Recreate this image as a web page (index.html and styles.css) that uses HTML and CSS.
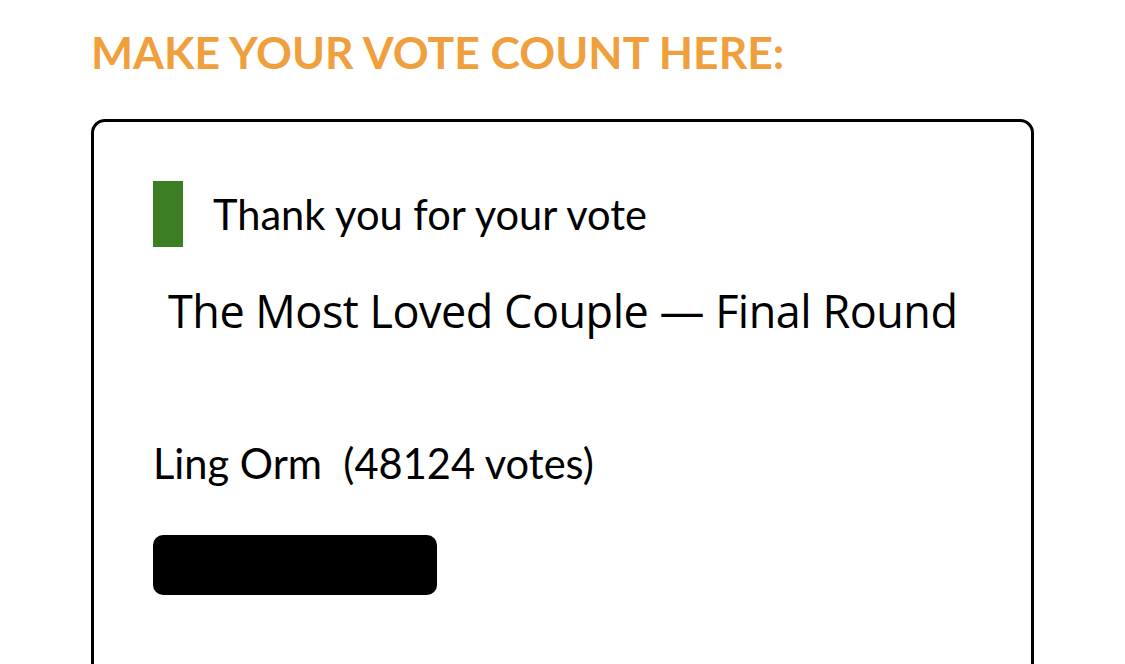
FILE: index.html
```html
<!DOCTYPE html>
<html lang="en">
  <head>
    <meta charset="UTF-8" />
    <meta name="viewport" content="width=device-width, initial-scale=1.0" />
    <title>Vote</title>
    <link rel="stylesheet" href="styles.css">
  </head>
  <body>
    <main class="page">
      <h2 class="heading">MAKE YOUR VOTE COUNT HERE:</h2>
      <section class="card">
        <div class="notice">
          <span class="notice-mark"></span>
          <span class="notice-text">Thank you for your vote</span>
        </div>
        <h3 class="poll-title">The Most Loved Couple — Final Round</h3>
        <div class="result">
          <p class="result-label">Ling Orm&nbsp; (48124 votes)</p>
          <div class="result-bar"></div>
        </div>
      </section>
    </main>
  </body>
</html>
```

FILE: styles.css
```css
* {
  margin: 0;
  padding: 0;
  box-sizing: border-box;
}
body {
  background: #fff;
  font-family: Lato, "Liberation Sans", sans-serif;
  color: #000;
}
.page {
  padding: 24px 91px 0;
}
.heading {
  font-family: Lato, sans-serif;
  font-weight: 700;
  font-size: 44.5px;
  line-height: 56px;
  color: #efa03c;
  margin-bottom: 39px;
}
.card {
  border: 3px solid #000;
  border-radius: 14px;
  padding: 59px 59px 0;
  height: 560px;
}
.notice {
  display: flex;
  align-items: center;
  gap: 30px;
}
.notice-mark {
  width: 30px;
  height: 66px;
  background: #3a7d23;
}
.notice-text {
  font-size: 41.6px;
}
.poll-title {
  font-family: "Open Sans", sans-serif;
  font-weight: 400;
  font-size: 45px;
  letter-spacing: -0.5px;
  white-space: nowrap;
  line-height: 56px;
  padding-left: 15px;
  margin-top: 36px;
}
.result {
  margin-top: 99px;
}
.result-label {
  font-size: 41.6px;
  line-height: 50px;
}
.result-bar {
  margin-top: 47px;
  width: 284px;
  height: 60px;
  background: #000;
  border-radius: 10px;
}
```
